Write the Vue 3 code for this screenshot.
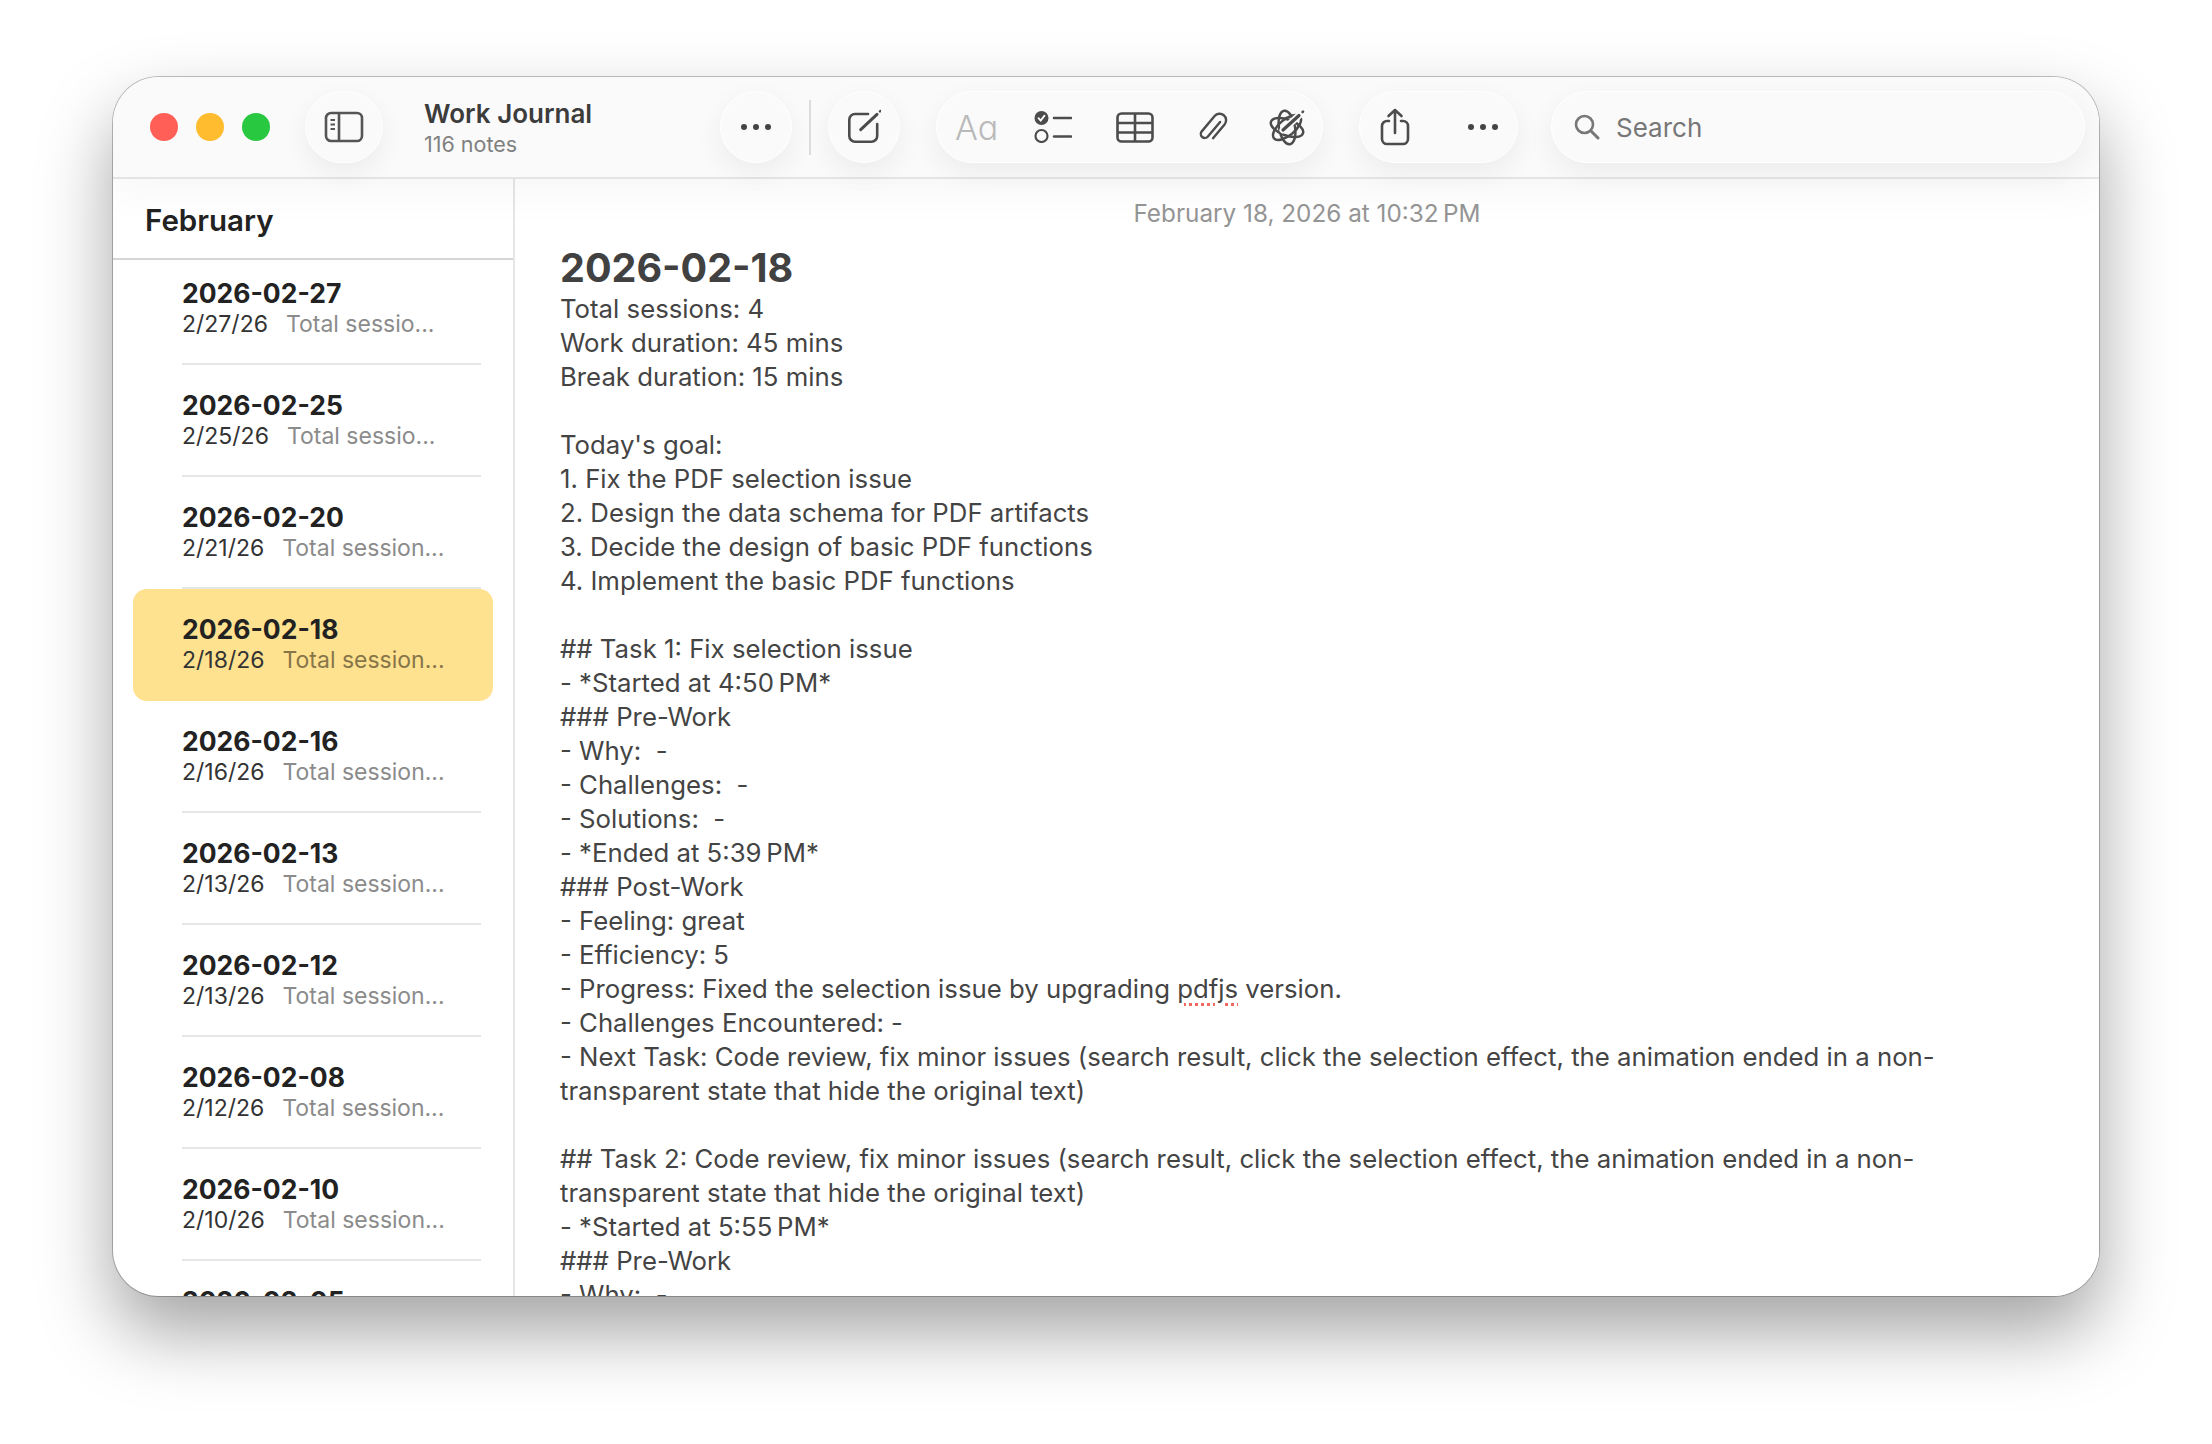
<script setup>
const notes = [
  { title: '2026-02-27', date: '2/27/26', preview: 'Total sessio...' },
  { title: '2026-02-25', date: '2/25/26', preview: 'Total sessio...' },
  { title: '2026-02-20', date: '2/21/26', preview: 'Total session...' },
  { title: '2026-02-18', date: '2/18/26', preview: 'Total session...', active: true },
  { title: '2026-02-16', date: '2/16/26', preview: 'Total session...' },
  { title: '2026-02-13', date: '2/13/26', preview: 'Total session...' },
  { title: '2026-02-12', date: '2/13/26', preview: 'Total session...' },
  { title: '2026-02-08', date: '2/12/26', preview: 'Total session...' },
  { title: '2026-02-10', date: '2/10/26', preview: 'Total session...' },
  { title: '2026-02-05', date: '2/5/26', preview: 'Total session...' }
]

const bodyBefore = `Total sessions: 4
Work duration: 45 mins
Break duration: 15 mins

Today's goal:
1. Fix the PDF selection issue
2. Design the data schema for PDF artifacts
3. Decide the design of basic PDF functions
4. Implement the basic PDF functions

## Task 1: Fix selection issue
- *Started at 4:50\u202fPM*
### Pre-Work
- Why:  -
- Challenges:  -
- Solutions:  -
- *Ended at 5:39\u202fPM*
### Post-Work
- Feeling: great
- Efficiency: 5
- Progress: Fixed the selection issue by upgrading `

const bodyAfter = ` version.
- Challenges Encountered: -
- Next Task: Code review, fix minor issues (search result, click the selection effect, the animation ended in a non-transparent state that hide the original text)

## Task 2: Code review, fix minor issues (search result, click the selection effect, the animation ended in a non-transparent state that hide the original text)
- *Started at 5:55\u202fPM*
### Pre-Work
- Why:  -
- Challenges:  -`
</script>

<template>
  <div class="page">
    <div class="window">
      <header class="toolbar">
        <div class="lights">
          <span class="light red"></span>
          <span class="light yellow"></span>
          <span class="light green"></span>
        </div>

        <div class="pill sidebar-btn">
          <svg width="40" height="32" viewBox="0 0 40 32" fill="none" stroke="#555" stroke-width="2.6">
            <rect x="2" y="2" width="36" height="28" rx="5" />
            <path d="M15 2v28" />
            <path d="M6.5 9h4.5M6.5 13.5h4.5M6.5 18h4.5" stroke-width="2.2" />
          </svg>
        </div>

        <div class="heading">
          <div class="heading-title">Work Journal</div>
          <div class="heading-sub">116 notes</div>
        </div>

        <div class="pill dots-btn">
          <svg width="32" height="8" viewBox="0 0 32 8" fill="#444">
            <circle cx="4" cy="4" r="3" /><circle cx="16" cy="4" r="3" /><circle cx="28" cy="4" r="3" />
          </svg>
        </div>

        <span class="divider"></span>

        <div class="pill compose-btn">
          <svg width="34" height="36" viewBox="0 0 34 36" fill="none" stroke="#4c4c4c" stroke-width="2.6" stroke-linecap="round">
            <path d="M21 5H8a5.700 5.700 0 0 0-5.700 5.700V27a5.700 5.700 0 0 0 5.700 5.700h16.500a5.700 5.700 0 0 0 5.700-5.700V15" />
            <path d="M13.700 20.700L30 5.300" stroke-width="3" />
            <path d="M33 2.400l.5-.5" stroke-width="2.400" />
          </svg>
        </div>

        <div class="pill tools">
          <span class="aa">Aa</span>

          <svg class="i-check" width="38" height="32" viewBox="0 0 38 32" fill="none" stroke="#4c4c4c" stroke-width="2.6" stroke-linecap="round">
            <circle cx="7.5" cy="7" r="7" fill="#4c4c4c" stroke="none" />
            <path d="M4.5 7.2l2.2 2.4 3.8-5" stroke="#fff" stroke-width="1.8" />
            <circle cx="7.5" cy="25" r="6" stroke-width="2.2" />
            <path d="M20 7h17M20 25.5h17" />
          </svg>

          <svg class="i-table" width="38" height="31" viewBox="0 0 38 31" fill="none" stroke="#4c4c4c" stroke-width="2.6">
            <rect x="1.5" y="1.5" width="35" height="28" rx="4" />
            <path d="M1.5 11h35M1.5 20.5h35M19 1.5v28" />
          </svg>

          <svg class="i-clip" width="33" height="35" viewBox="0 0 33 35" fill="none" stroke="#4c4c4c" stroke-width="2.4" stroke-linecap="round">
            <path transform="rotate(40 16.500 17.500)" d="M18 9V28a4 4 0 0 1-8 0V8a6.500 6.500 0 0 1 13 0V26" />
          </svg>

          <svg class="i-write" width="38" height="38" viewBox="0 0 38 38" fill="none" stroke="#4c4c4c" stroke-width="2.5" stroke-linecap="round">
            <ellipse cx="19" cy="19.500" rx="17" ry="8" transform="rotate(20 19 19.500)" />
            <ellipse cx="19" cy="19.500" rx="17" ry="8" transform="rotate(80 19 19.500)" />
            <ellipse cx="19" cy="19.500" rx="17" ry="8" transform="rotate(140 19 19.500)" />
            <path d="M15 22L32 6.500" stroke="#fafafa" stroke-width="7" />
            <path d="M15 22L31 7.500" stroke-width="3.200" />
            <path d="M34.500 4.200l.6-.6" stroke-width="2.400" />
          </svg>
        </div>

        <div class="pill share">
          <svg width="30" height="38" viewBox="0 0 30 38" fill="none" stroke="#4c4c4c" stroke-width="2.6" stroke-linecap="round" stroke-linejoin="round">
            <path d="M9 13H7a5 5 0 0 0-5 5v13a5 5 0 0 0 5 5h16a5 5 0 0 0 5-5V18a5 5 0 0 0-5-5h-2" />
            <path d="M15 25V2M8.500 8L15 2l6.500 6" />
          </svg>
          <svg class="share-dots" width="32" height="8" viewBox="0 0 32 8" fill="#444">
            <circle cx="4" cy="4" r="3" /><circle cx="16" cy="4" r="3" /><circle cx="28" cy="4" r="3" />
          </svg>
        </div>

        <div class="pill search">
          <svg width="26" height="26" viewBox="0 0 26 26" fill="none" stroke="#777" stroke-width="2.600" stroke-linecap="round">
            <circle cx="10.500" cy="10.500" r="8.500" />
            <path d="M17 17l7 7" stroke-width="3" />
          </svg>
          <span>Search</span>
        </div>
      </header>

      <div class="content">
        <aside class="sidebar">
          <div class="month">February</div>
          <div class="list">
            <div v-for="note in notes" :key="note.title" class="note" :class="{ active: note.active }">
              <div class="note-title">{{ note.title }}</div>
              <div class="note-sub">
                <span class="note-date">{{ note.date }}</span>
                <span class="note-preview">{{ note.preview }}</span>
              </div>
            </div>
          </div>
        </aside>

        <main class="editor">
          <div class="stamp">February 18, 2026 at 10:32&#8239;PM</div>
          <h1>2026-02-18</h1>
          <div class="body">{{ bodyBefore }}<span class="misspelled">pdfjs</span>{{ bodyAfter }}</div>
        </main>
      </div>
    </div>
  </div>
</template>

<style>
html,
body {
  margin: 0;
  background: #fff;
}
</style>

<style scoped>
.page {
  box-sizing: border-box;
  height: 1444px;
  padding: 77px 113px 148px;
  background: #fff;
  overflow: hidden;
  font-family: Inter, "Liberation Sans", sans-serif;
}

.window {
  height: 100%;
  display: flex;
  flex-direction: column;
  background: #fff;
  border-radius: 46px;
  overflow: hidden;
  box-shadow: 0 0 0 1px rgba(0, 0, 0, 0.24), 0 36px 72px rgba(0, 0, 0, 0.36);
}

.toolbar {
  position: relative;
  z-index: 2;
  flex: none;
  height: 102px;
  box-sizing: border-box;
  display: flex;
  align-items: center;
  padding-left: 37px;
  background: #fafafa;
  border-bottom: 2px solid #e4e4e4;
  box-shadow: 0 14px 44px rgba(0, 0, 0, 0.035);
}

.lights {
  display: flex;
  gap: 18px;
}

.light {
  width: 28px;
  height: 28px;
  border-radius: 50%;
}
.red { background: #ff5f57; }
.yellow { background: #febc2e; }
.green { background: #28c840; }

.pill {
  display: flex;
  align-items: center;
  box-sizing: border-box;
  height: 72px;
  border-radius: 36px;
  background: #fafafa;
  border: 1.5px solid #fff;
  box-shadow: 0 10px 28px rgba(0, 0, 0, 0.06);
}

.sidebar-btn {
  width: 78px;
  margin-left: 35px;
  justify-content: center;
}

.heading {
  width: 296px;
  margin-left: 41px;
  padding-top: 2px;
}

.heading-title {
  font-size: 26px;
  font-weight: 600;
  line-height: 32px;
  color: #3c3c3c;
}

.heading-sub {
  font-size: 21.500px;
  line-height: 28px;
  color: #808080;
}

.dots-btn,
.compose-btn {
  width: 72px;
  justify-content: center;
}

.divider {
  width: 2px;
  height: 55px;
  margin: 0 17px;
  background: #dcdcdc;
}

.tools {
  width: 387px;
  margin-left: 36px;
  padding-left: 18px;
}

.aa {
  width: 42px;
  font-size: 34px;
  font-weight: 300;
  color: #b9b9b9;
  font-feature-settings: "cv11";
}

.i-check { margin-left: 37px; }
.i-table { margin-left: 44px; }
.i-clip { margin-left: 43px; }
.i-write { margin-left: 38px; }

.share {
  width: 159px;
  margin-left: 36px;
  padding-left: 20px;
}

.share-dots {
  margin-left: 57px;
}

.search {
  width: 534px;
  margin-left: 33px;
  padding-left: 22px;
  gap: 16px;
  font-size: 26px;
  color: #777;
}

.content {
  flex: 1;
  min-height: 0;
  display: flex;
}

.sidebar {
  flex: none;
  width: 400px;
  border-right: 2px solid #e6e6e6;
  overflow: hidden;
}

.month {
  position: relative;
  z-index: 1;
  height: 81px;
  box-sizing: border-box;
  padding: 23px 0 0 32px;
  font-size: 29.500px;
  font-weight: 600;
  line-height: 37px;
  color: #222;
  background: #fff;
  border-bottom: 2px solid #d6d6d6;
}

.list {
  margin-top: -7px;
}

.note {
  box-sizing: border-box;
  height: 112px;
  margin: 0 20px;
  padding: 23px 0 0 49px;
  position: relative;
  border-radius: 14px;
}

.note::after {
  content: "";
  position: absolute;
  left: 49px;
  right: 12px;
  bottom: 0;
  height: 2px;
  background: #e6e6e6;
}

.note.active {
  background: #ffe28f;
}

.note.active::after {
  display: none;
}

.note-title {
  font-size: 26.500px;
  font-weight: 700;
  line-height: 34px;
  color: #222;
}

.note-sub {
  display: flex;
  gap: 18px;
  font-size: 23px;
  line-height: 29px;
}

.note-date {
  color: #333;
}

.note-preview {
  color: #8b8b8b;
}

.note.active .note-preview {
  color: #87754a;
}

.editor {
  flex: 1;
  min-width: 0;
  padding: 17px 100px 0 45px;
  overflow: hidden;
  background: #fff;
}

.stamp {
  margin-left: -45px;
  margin-right: -100px;
  text-align: center;
  font-size: 24.300px;
  line-height: 34px;
  color: #959595;
}

h1 {
  margin: 14px 0 0;
  font-size: 39.500px;
  font-weight: 700;
  line-height: 48px;
  color: #414141;
}

.body {
  font-size: 25.750px;
  line-height: 34px;
  color: #444;
  white-space: pre-wrap;
}

.misspelled {
  text-decoration: underline dotted #f06a60 3px;
  text-underline-offset: 5px;
}
</style>
